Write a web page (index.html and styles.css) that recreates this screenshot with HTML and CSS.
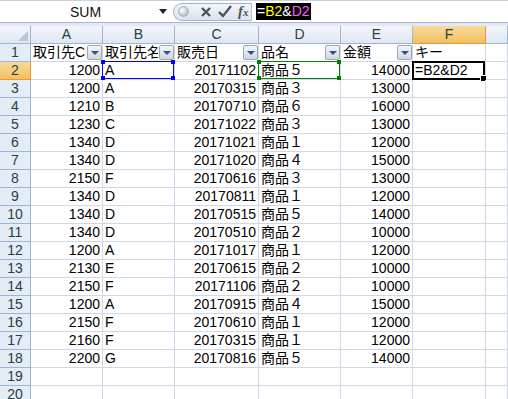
FILE: index.html
```
<!DOCTYPE html>
<html lang="ja">
<head>
<meta charset="UTF-8">
<title>Book1</title>
<link rel="stylesheet" href="styles.css">
</head>
<body>

<div class="formula-bar">
    <div class="name-box">
        <span class="name-text">SUM</span>
        <svg class="name-arrow" width="8" height="5" viewBox="0 0 8 5"><path d="M0 0H8L4 5Z" fill="#222"/></svg>
    </div>
    <div class="fx-buttons">
        <span class="knob"></span>
        <svg width="12" height="12" viewBox="0 0 12 12"><path d="M2 2L10 10M10 2L2 10" stroke="#505357" stroke-width="2.4"/></svg>
        <svg width="14" height="13" viewBox="0 0 14 13"><path d="M1 7L5 11L13 1" stroke="#505357" stroke-width="2.4" fill="none"/></svg>
        <span class="fx">f<small>x</small></span>
    </div>
    <div class="formula">
        <span class="formula-sel">=<span class="ref-b">B2</span>&amp;<span class="ref-d">D2</span></span>
    </div>
</div>
<div class="bar-gap"></div>

<div class="sheet">
    <div class="row head">
        <div class="corner"><span class="corner-tri"></span></div>
        <div class="col">A</div>
        <div class="col">B</div>
        <div class="col">C</div>
        <div class="col">D</div>
        <div class="col">E</div>
        <div class="col active">F</div>
        <div class="col"></div>
    </div>
    <div class="row">
        <div class="rh">1</div>
        <div class="cell"><span class="clip">取引先CD</span><span class="filter"></span></div>
        <div class="cell"><span class="clip">取引先名</span><span class="filter"></span></div>
        <div class="cell">販売日<span class="filter"></span></div>
        <div class="cell">品名<span class="filter"></span></div>
        <div class="cell">金額<span class="filter"></span></div>
        <div class="cell">キー</div>
        <div class="cell"></div>
    </div>
    <div class="row">
        <div class="rh active">2</div>
        <div class="cell num">1200</div>
        <div class="cell sel"><span class="ref-box blue"><i></i><i></i><i></i><i></i></span>A</div>
        <div class="cell num">20171102</div>
        <div class="cell sel"><span class="ref-box green"><i></i><i></i><i></i><i></i></span>商品５</div>
        <div class="cell num">14000</div>
        <div class="cell sel"><span class="edit-box"><b></b></span>=B2&amp;D2</div>
        <div class="cell"></div>
    </div>
    <div class="row"><div class="rh">3</div><div class="cell num">1200</div><div class="cell">A</div><div class="cell num">20170315</div><div class="cell">商品３</div><div class="cell num">13000</div><div class="cell"></div><div class="cell"></div></div>
    <div class="row"><div class="rh">4</div><div class="cell num">1210</div><div class="cell">B</div><div class="cell num">20170710</div><div class="cell">商品６</div><div class="cell num">16000</div><div class="cell"></div><div class="cell"></div></div>
    <div class="row"><div class="rh">5</div><div class="cell num">1230</div><div class="cell">C</div><div class="cell num">20171022</div><div class="cell">商品３</div><div class="cell num">13000</div><div class="cell"></div><div class="cell"></div></div>
    <div class="row"><div class="rh">6</div><div class="cell num">1340</div><div class="cell">D</div><div class="cell num">20171021</div><div class="cell">商品１</div><div class="cell num">12000</div><div class="cell"></div><div class="cell"></div></div>
    <div class="row"><div class="rh">7</div><div class="cell num">1340</div><div class="cell">D</div><div class="cell num">20171020</div><div class="cell">商品４</div><div class="cell num">15000</div><div class="cell"></div><div class="cell"></div></div>
    <div class="row"><div class="rh">8</div><div class="cell num">2150</div><div class="cell">F</div><div class="cell num">20170616</div><div class="cell">商品３</div><div class="cell num">13000</div><div class="cell"></div><div class="cell"></div></div>
    <div class="row"><div class="rh">9</div><div class="cell num">1340</div><div class="cell">D</div><div class="cell num">20170811</div><div class="cell">商品１</div><div class="cell num">12000</div><div class="cell"></div><div class="cell"></div></div>
    <div class="row"><div class="rh">10</div><div class="cell num">1340</div><div class="cell">D</div><div class="cell num">20170515</div><div class="cell">商品５</div><div class="cell num">14000</div><div class="cell"></div><div class="cell"></div></div>
    <div class="row"><div class="rh">11</div><div class="cell num">1340</div><div class="cell">D</div><div class="cell num">20170510</div><div class="cell">商品２</div><div class="cell num">10000</div><div class="cell"></div><div class="cell"></div></div>
    <div class="row"><div class="rh">12</div><div class="cell num">1200</div><div class="cell">A</div><div class="cell num">20171017</div><div class="cell">商品１</div><div class="cell num">12000</div><div class="cell"></div><div class="cell"></div></div>
    <div class="row"><div class="rh">13</div><div class="cell num">2130</div><div class="cell">E</div><div class="cell num">20170615</div><div class="cell">商品２</div><div class="cell num">10000</div><div class="cell"></div><div class="cell"></div></div>
    <div class="row"><div class="rh">14</div><div class="cell num">2150</div><div class="cell">F</div><div class="cell num">20171106</div><div class="cell">商品２</div><div class="cell num">10000</div><div class="cell"></div><div class="cell"></div></div>
    <div class="row"><div class="rh">15</div><div class="cell num">1200</div><div class="cell">A</div><div class="cell num">20170915</div><div class="cell">商品４</div><div class="cell num">15000</div><div class="cell"></div><div class="cell"></div></div>
    <div class="row"><div class="rh">16</div><div class="cell num">2150</div><div class="cell">F</div><div class="cell num">20170610</div><div class="cell">商品１</div><div class="cell num">12000</div><div class="cell"></div><div class="cell"></div></div>
    <div class="row"><div class="rh">17</div><div class="cell num">2160</div><div class="cell">F</div><div class="cell num">20170315</div><div class="cell">商品１</div><div class="cell num">12000</div><div class="cell"></div><div class="cell"></div></div>
    <div class="row"><div class="rh">18</div><div class="cell num">2200</div><div class="cell">G</div><div class="cell num">20170816</div><div class="cell">商品５</div><div class="cell num">14000</div><div class="cell"></div><div class="cell"></div></div>
    <div class="row"><div class="rh">19</div><div class="cell"></div><div class="cell"></div><div class="cell"></div><div class="cell"></div><div class="cell"></div><div class="cell"></div><div class="cell"></div></div>
    <div class="row"><div class="rh">20</div><div class="cell"></div><div class="cell"></div><div class="cell"></div><div class="cell"></div><div class="cell"></div><div class="cell"></div><div class="cell"></div></div>
</div>

</body>
</html>
```

FILE: styles.css
```
body {
    margin: 0;
    width: 508px;
    height: 399px;
    overflow: hidden;
    background: #fff;
    font-family: "Liberation Sans", "Noto Sans CJK JP", sans-serif;
}

/* formula bar */
.formula-bar {
    display: flex;
    align-items: center;
    height: 23px;
    box-sizing: border-box;
    border-top: 1px solid #c9d2de;
    border-bottom: 1px solid #a9b6c8;
}

.name-box {
    width: 173px;
    display: flex;
    align-items: center;
    box-sizing: border-box;
    padding-right: 6px;
}

.name-text {
    flex: 1;
    text-align: center;
    font-size: 14px;
    color: #111;
    padding-left: 12px;
}

.fx-buttons {
    width: 79px;
    height: 18px;
    box-sizing: border-box;
    display: flex;
    align-items: center;
    gap: 6px;
    padding-left: 4px;
    border: 1px solid #a3b2c6;
    border-right-color: #b8c4d3;
    border-radius: 9px 0 0 9px;
    background: linear-gradient(#f3f6fa, #dbe3ee);
}

.knob {
    width: 9px;
    height: 9px;
    border-radius: 50%;
    background: radial-gradient(circle at 35% 35%, #fff, #9ea7b3);
    border: 1px solid #a9b1bc;
    margin-right: 5px;
}

.fx {
    font-family: "Liberation Serif", serif;
    font-style: italic;
    font-weight: bold;
    font-size: 15px;
    color: #505357;
    line-height: 14px;
}

.fx small {
    font-size: 11px;
}

.formula {
    flex: 1;
    padding-left: 4px;
    font-size: 14px;
}

.formula-sel {
    display: inline-block;
    background: #000;
    color: #fff;
    line-height: 17px;
    padding: 0 1px;
}

.ref-b {
    color: #ffff00;
}

.ref-d {
    color: #ff5cff;
}

.bar-gap {
    height: 3px;
    background: #e3e9f2;
}

/* sheet */
.row {
    display: grid;
    grid-template-columns: 31px 72px 72px 84px 82px 72px 73px 1fr;
    height: 18px;
}

.row > div {
    box-sizing: border-box;
    border-right: 1px solid #d0d7e5;
    border-bottom: 1px solid #d0d7e5;
    position: relative;
    white-space: nowrap;
    overflow: hidden;
    font-size: 14px;
    line-height: 17px;
    color: #000;
}

.head > div {
    border-color: #9eb6ce;
    background: linear-gradient(#f3f6fb, #dfe7f2);
    text-align: center;
    color: #27413e;
}

.head .col.active {
    background: linear-gradient(#f9d99f, #f1c15f);
    border-color: #f29436;
}

.corner-tri {
    position: absolute;
    right: 2px;
    bottom: 2px;
    width: 0;
    height: 0;
    border-left: 10px solid transparent;
    border-bottom: 10px solid #b8c6d8;
}

.row > .rh {
    background: #e4ecf7;
    border-right-color: #9eb6ce;
    border-bottom-color: #9eb6ce;
    text-align: center;
    color: #27413e;
}

.row > .rh.active {
    background: linear-gradient(#f9d99f, #f1c15f);
    border-right-color: #f29436;
    border-bottom-color: #f29436;
}

.cell {
    padding-left: 2px;
}

.cell.num {
    text-align: right;
    padding-right: 2px;
    padding-left: 0;
}

.row > .cell.sel {
    overflow: visible;
}

.clip {
    display: block;
    width: 53px;
    overflow: hidden;
}

/* autofilter buttons */
.filter {
    position: absolute;
    right: 0;
    top: 1px;
    width: 15px;
    height: 15px;
    box-sizing: border-box;
    border: 1px solid #9aa6b6;
    border-radius: 2px;
    background: linear-gradient(#f4f6f9, #cfd6e0);
}

.filter::after {
    content: "";
    position: absolute;
    left: 3px;
    top: 5px;
    border-left: 4px solid transparent;
    border-right: 4px solid transparent;
    border-top: 4px solid #2f4f95;
}

/* reference boxes */
.ref-box {
    position: absolute;
    left: -1px;
    top: -1px;
    right: 0;
    bottom: 0;
    border: 1px solid;
}

.ref-box.blue {
    border-color: #0000ff;
}

.ref-box.green {
    border-color: #008000;
}

.ref-box i {
    position: absolute;
    width: 4px;
    height: 4px;
}

.ref-box.blue i {
    background: #0000ff;
}

.ref-box.green i {
    background: #008000;
}

.ref-box i:nth-child(1) { left: -2px; top: -2px; }
.ref-box i:nth-child(2) { right: -2px; top: -2px; }
.ref-box i:nth-child(3) { left: -2px; bottom: -2px; }
.ref-box i:nth-child(4) { right: -2px; bottom: -2px; }

.edit-box {
    position: absolute;
    left: -1px;
    top: -1px;
    right: 0;
    bottom: -1px;
    border: 2px solid #000;
}

.edit-box b {
    position: absolute;
    right: -4px;
    bottom: -4px;
    width: 5px;
    height: 5px;
    background: #000;
    border: 1px solid #fff;
}
```
